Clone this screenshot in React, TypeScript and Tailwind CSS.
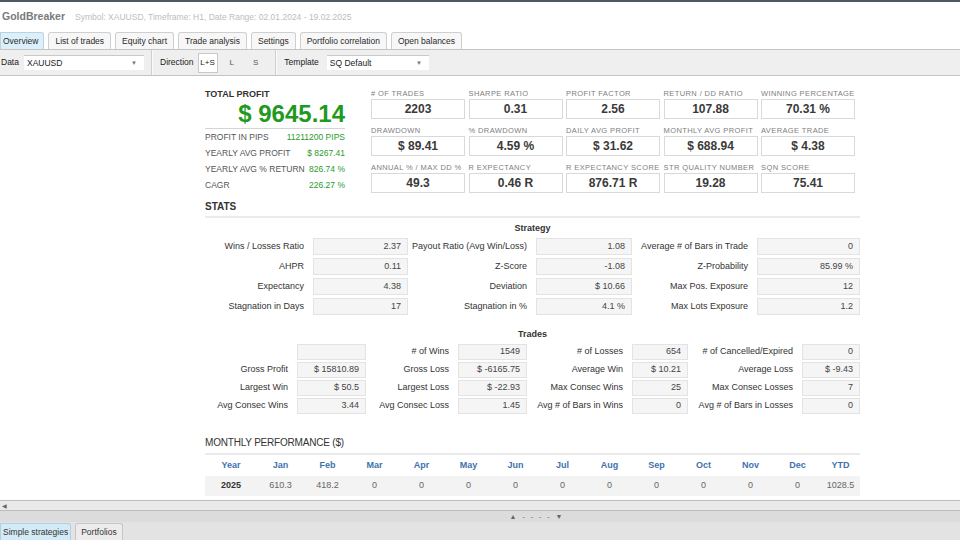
import React from 'react';

const font = "font-['Liberation_Sans',Arial,sans-serif]";

const tabs = ['Overview', 'List of trades', 'Equity chart', 'Trade analysis', 'Settings', 'Portfolio correlation', 'Open balances'];

const cards: [string, string][][] = [
    [['# of trades', '2203'], ['Sharpe ratio', '0.31'], ['Profit factor', '2.56'], ['Return / DD ratio', '107.88'], ['Winning percentage', '70.31 %']],
    [['Drawdown', '$ 89.41'], ['% Drawdown', '4.59 %'], ['Daily avg profit', '$ 31.62'], ['Monthly avg profit', '$ 688.94'], ['Average trade', '$ 4.38']],
    [['Annual % / Max DD %', '49.3'], ['R Expectancy', '0.46 R'], ['R Expectancy score', '876.71 R'], ['Str quality number', '19.28'], ['SQN score', '75.41']],
];

const strategy: [string, string][][] = [
    [['Wins / Losses Ratio', '2.37'], ['Payout Ratio (Avg Win/Loss)', '1.08'], ['Average # of Bars in Trade', '0']],
    [['AHPR', '0.11'], ['Z-Score', '-1.08'], ['Z-Probability', '85.99 %']],
    [['Expectancy', '4.38'], ['Deviation', '$ 10.66'], ['Max Pos. Exposure', '12']],
    [['Stagnation in Days', '17'], ['Stagnation in %', '4.1 %'], ['Max Lots Exposure', '1.2']],
];

const trades: [string, string][][] = [
    [['', ''], ['# of Wins', '1549'], ['# of Losses', '654'], ['# of Cancelled/Expired', '0']],
    [['Gross Profit', '$ 15810.89'], ['Gross Loss', '$ -6165.75'], ['Average Win', '$ 10.21'], ['Average Loss', '$ -9.43']],
    [['Largest Win', '$ 50.5'], ['Largest Loss', '$ -22.93'], ['Max Consec Wins', '25'], ['Max Consec Losses', '7']],
    [['Avg Consec Wins', '3.44'], ['Avg Consec Loss', '1.45'], ['Avg # of Bars in Wins', '0'], ['Avg # of Bars in Losses', '0']],
];

const months = ['Year', 'Jan', 'Feb', 'Mar', 'Apr', 'May', 'Jun', 'Jul', 'Aug', 'Sep', 'Oct', 'Nov', 'Dec', 'YTD'];
const perf = [
    ['2025', '610.3', '418.2', '0', '0', '0', '0', '0', '0', '0', '0', '0', '0', '1028.5'],
    ['2024', '867.73', '882.09', '487.9', '1102.9', '1040', '787.09', '771.9', '738.59', '708.79', '589.9', '789.7', '576.4', '8616.94'],
];

function Dropdown({ value, width }: { value: string; width: string }) {
    return (
        <div className={`${width} h-[15px] bg-white border-t border-[#c9c9c9] flex items-center justify-between pl-[3px] pr-[7px]`}>
            <span className="text-[8.5px] text-[#222]">{value}</span>
            <span className="text-[6px] text-[#777]">▼</span>
        </div>
    );
}

function Card({ label, value }: { label: string; value: string }) {
    return (
        <div className="flex flex-col">
            <div className="h-[10px] text-[7.5px] leading-[9px] tracking-[0.4px] text-[#808080] uppercase whitespace-nowrap">{label}</div>
            <div className="h-[20px] border border-[#d9d9d9] flex items-center justify-center text-[12px] font-bold text-[#3a3a3a]">{value}</div>
        </div>
    );
}

function StatRow({ label, value }: { label: string; value: string }) {
    return (
        <div className="flex items-center justify-between h-[16px] text-[8.5px] uppercase">
            <span className="text-[#555]">{label}</span>
            <span className="text-[#2a9a2a]">{value}</span>
        </div>
    );
}

function Label({ text }: { text: string }) {
    return <div className="flex items-center justify-end pr-[9px] text-[9px] text-[#333] whitespace-nowrap">{text}</div>;
}

function Box({ text }: { text: string }) {
    return <div className="flex items-center justify-end pr-[6px] bg-[#f5f5f5] border border-[#e3e3e3] text-[9px] text-[#444]">{text}</div>;
}

export default function App() {
    return (
        <div className={`${font} w-[960px] h-[540px] flex flex-col bg-white overflow-hidden`}>
            <div className="h-[2px] bg-[#4e5963]" />
            <div className="h-[30px] flex items-center pl-[2px] gap-[10px]">
                <span className="text-[10.5px] font-bold text-[#7a7a7a]">GoldBreaker</span>
                <span className="text-[8.5px] text-[#bdbdbd]">Symbol: XAUUSD, Timeframe: H1, Date Range: 02.01.2024 - 19.02.2025</span>
            </div>
            <div className="h-[17px] flex items-end gap-[4px]">
                {tabs.map((t, i) => (
                    <div
                        key={t}
                        className={
                            i === 0
                                ? 'h-[17px] flex items-center pl-[2px] pr-[5px] text-[8.5px] text-[#2a2a2a] bg-[#dcf0fb] border border-b-0 border-[#b9d3e2] rounded-tr-[3px]'
                                : 'h-[17px] flex items-center px-[6px] text-[8.5px] text-[#2a2a2a] bg-[#f7f7f7] border border-b-0 border-[#cfcfcf] rounded-t-[3px]'
                        }
                    >
                        {t}
                    </div>
                ))}
            </div>
            <div className="h-[27px] bg-[#efefef] border-t border-b border-[#c4c4c4] flex items-center text-[8.5px] text-[#222]">
                <span className="pl-[1px] w-[24px]">Data</span>
                <Dropdown value="XAUUSD" width="w-[120px]" />
                <div className="ml-[7px] w-[2px] h-full border-l border-[#cfcfcf] bg-white/70" />
                <span className="ml-[7px]">Direction</span>
                <div className="ml-[4px] h-[20px] w-[20px] bg-white border border-[#c9c9c9] flex items-center justify-center text-[8px]">L+S</div>
                <span className="ml-[12px] text-[8px] text-[#555]">L</span>
                <span className="ml-[19px] text-[8px] text-[#555]">S</span>
                <div className="ml-[17px] w-[2px] h-full border-l border-[#cfcfcf] bg-white/70" />
                <span className="ml-[7px]">Template</span>
                <div className="ml-[8px]">
                    <Dropdown value="SQ Default" width="w-[102px]" />
                </div>
            </div>

            <div className="flex-1 overflow-hidden pl-[205px] pt-[13px]">
                <div className="w-[655px]">
                    <div className="flex">
                        <div className="w-[140px] flex flex-col">
                            <div className="h-[10px] text-[9px] leading-[10px] font-bold text-[#333]">TOTAL PROFIT</div>
                            <div className="h-[30px] flex items-center justify-end text-[24px] font-bold text-[#1f9a1f] border-b border-[#d4d4d4]">$ 9645.14</div>
                            <StatRow label="Profit in pips" value="11211200 PIPS" />
                            <StatRow label="Yearly avg profit" value="$ 8267.41" />
                            <StatRow label="Yearly avg % return" value="826.74 %" />
                            <StatRow label="CAGR" value="226.27 %" />
                        </div>
                        <div className="ml-[26px] grid grid-cols-[repeat(5,94px)] gap-x-[3.5px] gap-y-[7px] content-start">
                            {cards.flat().map(([l, v]) => (
                                <Card key={l} label={l} value={v} />
                            ))}
                        </div>
                    </div>

                    <div className="mt-[8px] h-[12px] text-[10px] leading-[12px] font-bold text-[#333]">STATS</div>
                    <div className="mt-[3px] h-[2px] bg-[#ebebeb]" />
                    <div className="mt-[4px] h-[12px] text-[9px] leading-[12px] font-bold text-[#333] text-center">Strategy</div>
                    <div className="mt-[4px] grid grid-cols-[108px_95px_128px_96px_125px_103px] auto-rows-[17px] gap-y-[3px]">
                        {strategy.flat().map(([l, v], i) => (
                            <React.Fragment key={i}>
                                <Label text={l} />
                                <Box text={v} />
                            </React.Fragment>
                        ))}
                    </div>

                    <div className="mt-[13px] h-[12px] text-[9px] leading-[12px] font-bold text-[#333] text-center">Trades</div>
                    <div className="mt-[4px] grid grid-cols-[92px_69px_92px_69px_105px_56px_114px_58px] auto-rows-[16px] gap-y-[2px]">
                        {trades.flat().map(([l, v], i) => (
                            <React.Fragment key={i}>
                                <Label text={l} />
                                <Box text={v} />
                            </React.Fragment>
                        ))}
                    </div>

                    <div className="mt-[23px] h-[12px] text-[10px] leading-[12px] text-[#333] tracking-[-0.2px]">MONTHLY PERFORMANCE ($)</div>
                    <div className="mt-[4px] h-[2px] bg-[#ebebeb]" />
                    <div className="mt-[1px] grid grid-cols-[52px_repeat(12,47px)_39px] auto-rows-[20px]">
                        {months.map((m) => (
                            <div key={m} className="flex items-center justify-center text-[9px] font-bold text-[#3f72ad]">{m}</div>
                        ))}
                        {perf.map((row, r) =>
                            row.map((c, j) => (
                                <div
                                    key={`${r}-${j}`}
                                    className={`flex items-center justify-center text-[9px] ${r === 0 ? 'bg-[#f3f3f3]' : ''} ${j === 0 ? 'font-bold text-[#333]' : 'text-[#666]'}`}
                                >
                                    {c}
                                </div>
                            ))
                        )}
                    </div>
                </div>
            </div>

            <div className="h-[11px] bg-[#e9e9e9] border-t border-b border-[#bdbdbd] flex items-center pl-[2px]">
                <span className="text-[6px] text-[#666] leading-none">◀</span>
            </div>
            <div className="h-[11px] bg-[#dcdcdc] flex items-center justify-center">
                <span className="ml-[114px] text-[7px] text-[#666] tracking-[2px] leading-none">▲ - - - - ▼</span>
            </div>
            <div className="h-[18px] bg-[#e3e3e3] flex items-end gap-[4px]">
                <div className="h-[17px] flex items-center px-[2px] text-[8.5px] text-[#333] bg-[#d3eaf7] border border-b-0 border-[#b5cfdf] rounded-tr-[3px]">Simple strategies</div>
                <div className="h-[17px] flex items-center px-[5px] text-[8.5px] text-[#333] bg-[#ececec] border border-b-0 border-[#c6c6c6] rounded-t-[3px]">Portfolios</div>
            </div>
        </div>
    );
}
